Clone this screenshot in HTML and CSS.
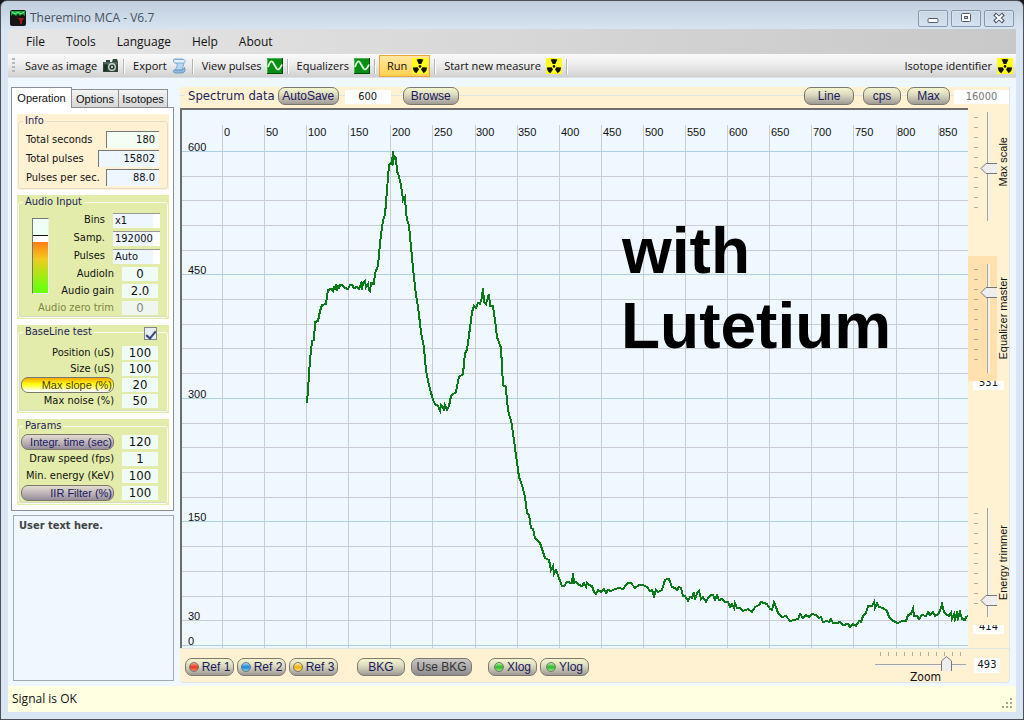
FILE: index.html
```html
<!DOCTYPE html>
<html lang="en">
<head>
<meta charset="utf-8">
<title>Theremino MCA - V6.7</title>
<link rel="stylesheet" href="styles.css">
</head>
<body>
<svg class="defs" aria-hidden="true">
  <symbol id="nuke" viewBox="0 0 16 16">
    <rect width="16" height="16" fill="#ffff1e"/>
    <g fill="#111">
      <path d="M4.6 1.6Q8 .2 11.4 1.6L9.3 6H6.7Z"/>
      <path d="M.8 9.4L5.6 9.2L7 11.6L4.3 15.3Q1.2 13.4 .8 9.4Z"/>
      <path d="M15.2 9.4L10.4 9.2L9 11.6L11.7 15.3Q14.8 13.4 15.2 9.4Z"/>
      <circle cx="8" cy="8.4" r="1.3"/>
    </g>
  </symbol>
  <symbol id="wave" viewBox="0 0 16 16">
    <rect width="16" height="16" fill="#078c14"/>
    <path d="M0 .5H16M.5 0V16" stroke="#46b64b"/>
    <path d="M0 15.5H16M15.5 0V16" stroke="#044b0a"/>
    <path d="M1 9Q3.500 1 6 4.500L9.500 10.500Q12 13.500 15 6.500" fill="none" stroke="#d9ffd9" stroke-width="1.800"/>
  </symbol>
  <symbol id="camera" viewBox="0 0 17 14">
    <path d="M1 3H4V1H8V3H10L11 0H15L16 3V13H1Z" fill="#2e4638"/>
    <path d="M1.500 4H15.500" stroke="#6d8574"/>
    <rect x="2" y="6" width="3" height="6" fill="#1d2f25"/>
    <circle cx="10" cy="8" r="4" fill="#c9d4c8"/><circle cx="10" cy="8" r="2.600" fill="#24382c"/><circle cx="10" cy="8" r="1.200" fill="#b8cbb9"/>
  </symbol>
  <symbol id="scroll" viewBox="0 0 16 16">
    <path d="M2 1H11Q13 2 12 5L10 12H3Q6 9 5 5H3Q0 4 2 1Z" fill="#b7d6ef" stroke="#6f9fc6" stroke-width=".8"/>
    <path d="M2 1.500H12Q15 3 12 5H3" fill="#e2f0fb" stroke="#6f9fc6" stroke-width=".8"/>
    <path d="M2 12H10Q12 11 12.500 9.500Q14.500 13 11 15H3Q0 14 2 12Z" fill="#8db9dc" stroke="#5d8fb9" stroke-width=".8"/>
  </symbol>
</svg>
<div class="window">
  <header class="titlebar">
    <svg class="app-icon" viewBox="0 0 16 16"><rect width="16" height="16" rx="2" fill="#161616"/><path d="M1 1H15V6L12 4L10 6L8 4L6 6L3 4L1 6Z" fill="#19a63a"/><path d="M2 2L5 4L8 2L11 4L14 2" stroke="#86e69a" fill="none"/><path d="M8 8H14L12 11V14H10V11Z" fill="#a81515"/></svg>
    <span class="title">Theremino MCA - V6.7</span>
    <div class="winbtns">
      <button aria-label="Minimize"><svg width="12" height="12"><rect x="1" y="6.500" width="10" height="4" rx="1" fill="#fff" stroke="#535c6b"/></svg></button>
      <button aria-label="Maximize"><svg width="12" height="12"><rect x="1.500" y="1.500" width="9" height="8" rx="1" fill="#fff" stroke="#535c6b"/><rect x="4.500" y="4.500" width="3" height="2" fill="#c5d3e4" stroke="#535c6b"/></svg></button>
      <button aria-label="Close"><svg width="12" height="12"><path d="M1.500 2L10.500 10M10.500 2L1.500 10" stroke="#535c6b" stroke-width="4"/><path d="M2.500 2.800L9.500 9.200M9.500 2.800L2.500 9.200" stroke="#fff" stroke-width="2"/></svg></button>
    </div>
  </header>
  <nav class="menubar">
    <button>File</button><button>Tools</button><button>Language</button><button>Help</button><button>About</button>
  </nav>
  <div class="toolbar">
    <i class="grip"></i>
    <button>Save as image<svg class="ico cam"><use href="#camera"/></svg></button>
    <button>Export<svg class="ico"><use href="#scroll"/></svg></button>
    <button>View pulses<svg class="ico"><use href="#wave"/></svg></button>
    <button>Equalizers<svg class="ico"><use href="#wave"/></svg></button>
    <button class="active">Run<svg class="ico"><use href="#nuke"/></svg></button>
    <button>Start new measure<svg class="ico"><use href="#nuke"/></svg></button>
    <button class="last">Isotope identifier<svg class="ico"><use href="#nuke"/></svg></button>
  </div>
  <main class="body">
    <aside class="side">
      <div class="tabs" role="tablist">
        <button role="tab" class="tab on" aria-selected="true">Operation</button><button role="tab" class="tab" aria-selected="false">Options</button><button role="tab" class="tab" aria-selected="false">Isotopes</button>
      </div>
      <div class="panel">
        <div class="group cream"><fieldset class="info"><legend>Info</legend>
          <div class="row"><label for="ts">Total seconds</label><input id="ts" class="sunk mint" value="180"></div>
          <div class="row"><label for="tp">Total pulses</label><input id="tp" class="sunk wide" value="15802"></div>
          <div class="row"><label for="pps">Pulses per sec.</label><input id="pps" class="sunk" value="88.0"></div>
        </fieldset></div>
        <div class="group"><fieldset class="audio"><legend>Audio Input</legend>
          <div class="meter" role="img" aria-label="Audio level"><i></i></div>
          <div class="rows">
            <div class="row combo"><label for="bins">Bins</label><select id="bins"><option>x1</option></select></div>
            <div class="row combo"><label for="samp">Samp.</label><select id="samp"><option>192000</option></select></div>
            <div class="row combo"><label for="pul">Pulses</label><select id="pul"><option>Auto</option></select></div>
            <div class="row"><label for="ain">AudioIn</label><input id="ain" class="num" value="0"></div>
            <div class="row"><label for="gain">Audio gain</label><input id="gain" class="num" value="2.0"></div>
            <div class="row dim"><label for="trim">Audio zero trim</label><input id="trim" class="num" value="0"></div>
          </div>
        </fieldset></div>
        <div class="group"><fieldset class="base"><legend>BaseLine test</legend>
          <input type="checkbox" class="check" aria-label="BaseLine test" checked>
          <div class="row"><label for="pos">Position (uS)</label><input id="pos" class="num" value="100"></div>
          <div class="row"><label for="size">Size (uS)</label><input id="size" class="num" value="100"></div>
          <div class="row"><button class="pill gold">Max slope (%)</button><input class="num" aria-label="Max slope (%)" value="20"></div>
          <div class="row"><label for="noise">Max noise (%)</label><input id="noise" class="num" value="50"></div>
        </fieldset></div>
        <div class="group"><fieldset class="params"><legend>Params</legend>
          <div class="row"><button class="pill mauve">Integr. time (sec)</button><input class="num" aria-label="Integr. time (sec)" value="120"></div>
          <div class="row"><label for="fps">Draw speed (fps)</label><input id="fps" class="num" value="1"></div>
          <div class="row"><label for="kev">Min. energy (KeV)</label><input id="kev" class="num" value="100"></div>
          <div class="row"><button class="pill mauve">IIR Filter (%)</button><input class="num" aria-label="IIR Filter (%)" value="100"></div>
        </fieldset></div>
      </div>
      <textarea class="user" aria-label="User text">User text here.</textarea>
    </aside>
    <section class="spectrum">
      <div class="head">
        <span class="name">Spectrum data</span>
        <button class="pill w60">AutoSave</button>
        <input class="box" aria-label="AutoSave seconds" value="600">
        <button class="pill w56">Browse</button>
        <span class="fill"></span>
        <button class="pill w50">Line</button>
        <button class="pill w38">cps</button>
        <button class="pill w43">Max</button>
        <input class="box grey" aria-label="Max value" value="16000">
      </div>
      <div class="chart">
        <svg class="plot" viewBox="182 110 786 539" preserveAspectRatio="xMinYMin slice" role="img" aria-label="Energy spectrum with Lutetium">
          <path class="grid" d="M222.500 125V649M264.500 125V649M306.500 125V649M348.500 125V649M390.500 125V649M432.500 125V649M475.500 125V649M517.500 125V649M559.500 125V649M601.500 125V649M643.500 125V649M685.500 125V649M727.500 125V649M769.500 125V649M811.500 125V649M853.500 125V649M896.500 125V649M938.500 125V649"/>
          <path class="grid" d="M182 176.500H968M182 200.500H968M182 225.500H968M182 250.500H968M182 299.500H968M182 324.500H968M182 348.500H968M182 373.500H968M182 423.500H968M182 447.500H968M182 472.500H968M182 497.500H968M182 546.500H968M182 571.500H968M182 596.500H968M182 620.500H968"/>
          <path class="major" d="M182 151.500H968M182 274.500H968M182 398.500H968M182 521.500H968M182 645.500H968"/>
          <g class="axis">
            <text x="224" y="136">0</text><text x="266" y="136">50</text><text x="308" y="136">100</text><text x="350" y="136">150</text><text x="392" y="136">200</text><text x="434" y="136">250</text><text x="476" y="136">300</text><text x="518" y="136">350</text><text x="561" y="136">400</text><text x="603" y="136">450</text><text x="645" y="136">500</text><text x="687" y="136">550</text><text x="729" y="136">600</text><text x="771" y="136">650</text><text x="813" y="136">700</text><text x="855" y="136">750</text><text x="897" y="136">800</text><text x="939" y="136">850</text>
            <text x="188" y="151">600</text><text x="188" y="274">450</text><text x="188" y="398">300</text><text x="188" y="521">150</text><text x="188" y="620">30</text><text x="188" y="645">0</text>
          </g>
          <path class="curve" d="M307 403L308 390L310 360L312 341L314 340L315 322L318 321L320 311L322 305L326 304L328 290L331 289L333 291L334 286L335 290L336 284L337 291L338 285L339 289L340 285L342 285L345 288L348 289L350 285L352 285L354 288L357 287L359 289L361 284L362 290L363 283L365 281L366 287L368 284L369 290L370 291L371 283L374 284L375 273L378 266L380 243L383 220L385 215L387 190L389 165L391 163L392 164L393 151L393 165L394 156L396 158L397 172L398 173L401 185L403 200L405 197L406 212L407 220L409 225L411 247L413 268L416 295L418 307L421 332L424 348L426 370L429 385L433 400L435 404L438 406L440 411L441 405L443 407L444 411L445 405L447 410L449 406L451 396L452 395L456 392L459 377L463 374L465 353L467 350L470 328L472 312L474 306L476 308L478 303L480 304L482 297L483 288L484 302L486 304L488 297L489 294L490 306L493 306L495 320L497 337L501 348L503 385L506 387L507 402L509 415L511 420L513 433L515 448L519 477L522 485L525 497L527 513L529 515L531 528L533 529L535 538L540 543L543 552L545 558L549 560L551 570L553 566L554 574L556 570L559 578L562 586L564 586L567 582L572 583L573 573L574 583L576 582L579 585L582 586L584 583L586 587L587 583L589 585L592 586L594 592L596 594L598 590L601 592L604 589L606 593L608 590L611 591L615 589L619 588L623 589L626 585L628 583L631 583L635 588L639 585L643 585L647 587L650 591L652 590L654 596L656 590L658 592L662 590L665 580L667 579L669 579L672 587L675 588L677 590L679 587L681 588L683 596L685 596L688 601L690 597L692 598L694 592L695 600L697 593L699 591L701 599L703 597L706 602L708 598L711 595L713 595L715 600L717 595L719 600L722 599L725 602L728 602L730 607L732 604L734 608L735 603L737 608L740 608L743 611L748 609L752 612L755 607L759 605L761 602L764 603L767 604L770 609L772 610L774 602L776 607L778 613L782 617L786 616L790 621L794 620L798 619L800 614L803 618L806 615L809 617L812 614L816 615L819 618L821 617L823 622L827 621L829 622L831 619L833 623L837 623L840 622L843 625L848 624L850 627L853 624L856 626L859 621L861 622L863 616L866 613L868 606L872 606L874 602L875 608L877 603L879 607L883 608L887 611L889 617L892 620L895 622L898 623L902 621L906 621L908 615L911 614L913 609L914 616L917 616L919 619L922 615L926 616L928 612L930 615L933 612L935 616L938 614L940 611L942 604L944 612L946 614L949 616L951 613L952 619L954 614L955 619L957 613L958 618L960 612L962 619L965 620L966 617L968 616"/>
          <g class="note"><text x="622" y="273">with</text><text x="621" y="348">Lutetium</text></g>
        </svg>
      </div>
      <div class="sliders">
        <div class="vs top"><div class="ticks"></div><input id="mx" type="range" value="52"><label for="mx">Max scale</label></div>
        <div class="vs mid"><div class="ticks"></div><input id="eq" type="range" value="23"><label for="eq">Equalizer master</label></div>
        <output class="val">531</output>
        <div class="vs low"><div class="ticks"></div><input id="en" type="range" value="89"><label for="en">Energy trimmer</label></div>
        <output class="val bottom">414</output>
      </div>
      <div class="foot">
        <button class="pill ref"><i class="dot red"></i>Ref 1</button>
        <button class="pill ref"><i class="dot blue"></i>Ref 2</button>
        <button class="pill ref"><i class="dot amber"></i>Ref 3</button>
        <button class="pill bkg">BKG</button>
        <button class="pill use">Use BKG</button>
        <button class="pill ref"><i class="dot green"></i>Xlog</button>
        <button class="pill ref"><i class="dot green"></i>Ylog</button>
        <div class="zoom"><div class="hticks"></div><input id="zm" type="range" value="82"><label for="zm">Zoom</label></div>
        <output class="zval">493</output>
      </div>
    </section>
  </main>
  <footer class="status"><span>Signal is OK</span>
    <svg width="12" height="12"><path d="M9 1h2M9 5h2M9 9h2M5 5h2M5 9h2M1 9h2" stroke="#a6a695" stroke-width="2"/></svg></footer>
</div>
</body>
</html>
```
FILE: styles.css
```css
* { box-sizing: border-box; }
body { margin: 0; background: #16161c; font: 11px/14px "DejaVu Sans Condensed", "DejaVu Sans", sans-serif; color: #111; }
button, input, select, textarea { font: inherit; color: inherit; margin: 0; padding: 0; border: 0; background: none; border-radius: 0; }
.defs { position: absolute; width: 0; height: 0; }
.window { min-height: 100vh; display: flex; flex-direction: column; border: 1px solid #4c4f58; border-radius: 7px 7px 0 0; padding: 0 7px 7px; background: linear-gradient(#c0cedd, #d9e5f2 30px); }

.titlebar { height: 28px; display: flex; align-items: center; padding: 6px 2px 0; font: 12px/16px "Open Sans", "Noto Sans", sans-serif; color: #48525f; }
.app-icon { width: 16px; height: 16px; margin-right: 4px; }
.winbtns { margin-left: auto; display: flex; gap: 3px; }
.winbtns button { width: 30px; height: 17px; border: 1px solid #8797ae; border-radius: 2px; box-shadow: inset 0 0 0 1px #d7e2ef; display: grid; place-items: center; }

.menubar { height: 25px; display: flex; align-items: center; padding-left: 7px; background: linear-gradient(90deg, #e6e6e6, #c8c8c8); font: 12px/16px "Open Sans", "Noto Sans", sans-serif; }
.menubar button { padding: 0 10px 0 11px; }
.toolbar { height: 24px; display: flex; align-items: center; background: linear-gradient(#fafafa, #ededed 45%, #d0d0d0); border-bottom: 1px solid #dcdfe3; font: 11px/16px "Open Sans", "Noto Sans", sans-serif; }
.grip { width: 3px; height: 15px; margin: 0 5px 0 4px; background: repeating-linear-gradient(#b8b8b8 0 2px, transparent 2px 4px); }
.toolbar button { display: flex; align-items: center; gap: 5px; height: 22px; padding: 0 4px 0 5px; margin-right: 5px; position: relative; white-space: nowrap; }
.toolbar button:not(.last)::after { content: ""; position: absolute; right: -2px; top: 4px; width: 2px; height: 15px; background: linear-gradient(90deg, #b4b4b4 50%, #fff 50%); }
.toolbar .active { background: linear-gradient(#ffe9a8, #ffd04c); outline: 1px solid #e5a93a; outline-offset: -1px; padding: 0 2px 0 8px; margin-right: 9px; }
.toolbar .active::after { margin-right: -4px; }
.toolbar .last { margin: 0 0 0 auto; padding: 0 3px; }
.ico { width: 16px; height: 16px; }
.cam { width: 17px; height: 14px; }

.body { flex: 1; display: grid; grid-template-columns: 163px 1fr; gap: 6px; padding: 9px 6px 3px 3px; background: #eff7ff; }
.side { display: flex; flex-direction: column; }
.tabs { display: flex; align-items: flex-end; height: 20px; position: relative; z-index: 1; font: 11px/14px "Liberation Sans", Arial, sans-serif; }
.tab { height: 18px; width: 47px; border: 1px solid #8b8e94; border-bottom: 0; background: linear-gradient(#f4f4f4, #d6d6d6); }
.tab + .tab + .tab { width: 49px; border-left: 0; }
.tab.on { height: 21px; width: 61px; background: #fff; margin-bottom: -1px; border-right-width: 1px; }
.tab.on + .tab { border-left: 0; }
.panel { border: 1px solid #8b8e94; background: #fff; padding: 6px 4px 5px 5px; display: flex; flex-direction: column; gap: 6px; }
.group { background: #e3ecab; padding: 0 1px 1px; }
.group.cream { background: #fff2d3; }
.group.cream + .group { margin-top: -1px; }
fieldset { margin: 0; padding: 0 9px 2px 2px; border: 1px solid #f7faf0; border-radius: 3px; box-shadow: inset 1px -1px 0 #d7dcc0; min-width: 0; position: relative; }
.cream fieldset { border-color: #e3ddd0; box-shadow: none; }
legend { margin-left: 2px; padding: 0 2px; height: 14px; color: #1d1c5c; }
.row { display: flex; align-items: center; justify-content: flex-end; gap: 8px; height: 17px; white-space: nowrap; }
.num { width: 36px; height: 14px; background: #f0fbf6; text-align: center; font-size: 13px; }
.info { padding: 2px 8px 1px 7px; }
.info legend { margin-left: -3px; }
.info .row { height: 19px; justify-content: space-between; gap: 0; }
.sunk { width: 53px; height: 17px; background: #eef6ff; border-top: 1px solid #777; border-left: 1px solid #777; text-align: right; padding: 0 4px 2px 0; }
.sunk.mint { background: #f3fff4; }
.sunk.wide { width: 61px; }
.audio { padding-top: 2px; padding-bottom: 1px; }
.combo { height: 18px; padding-right: 0; margin-right: -2px; }
.combo select { width: 47px; height: 15px; appearance: none; background: linear-gradient(90deg, #eef6ff 40px, #fff 40px); border-top: 1px solid #999; padding-left: 2px; line-height: 13px; }
.dim { color: #7d8540; }
.dim .num { color: #888; background: #eef6ee; }
.meter { position: absolute; left: 13px; top: 9px; width: 17px; height: 76px; border: 1px solid #777; border-right-color: #eee; border-bottom-color: #eee; background: linear-gradient(#f0fff6 16px, #111 16px 17px, #fff 17px 23px, #ff7d12 23px, #f2ca20 40px, #70ff0c 68px); }
.base { padding-top: 6px; }
.base .row { height: 16px; }
.check { position: absolute; right: 10px; top: -12px; width: 13px; height: 13px; appearance: none; border: 1px solid #7f858c; background: #e9edf4; display: grid; place-items: center; }
.check::after { content: ""; width: 4px; height: 8px; border: solid #35457e; border-width: 0 2px 2px 0; transform: rotate(40deg); }
.params { padding-top: 0; }
.user { flex: 1; resize: none; outline: 0; margin: 4px 0 2px 2px; padding: 3px 5px; border: 1px solid #a3a9b1; background: #eff7ff; font: bold 11px/14px "DejaVu Sans Condensed", "DejaVu Sans", sans-serif; color: #444; }

.pill { display: inline-flex; align-items: center; justify-content: center; height: 18px; border: 1px solid #7d786e; border-radius: 7px; background: linear-gradient(#f5f6cf, #dedcc0 40%, #9f9a96); font: 12px/14px "Liberation Sans", Arial, sans-serif; color: #20195f; white-space: nowrap; }
.row .pill { width: 94px; height: 16px; justify-content: flex-end; padding-right: 1px; font-size: 11px; }
.pill.gold { background: linear-gradient(#f7a800, #ffff0a 45%, #fff 95%); color: #4d3a10; }
.pill.mauve { background: linear-gradient(#e3dccf, #bfb6bb 50%, #948c98); }
.w60 { width: 61px; } .w56 { width: 56px; } .w50 { width: 50px; } .w38 { width: 38px; } .w43 { width: 43px; }

.spectrum { display: grid; grid-template-columns: 1fr 41px; grid-template-rows: 21px 1fr 34px; background: #fff2d3; border: solid #dfe4e6; border-width: 0 1px 1px 0; border-radius: 0 0 4px 4px; }
.head { grid-column: 1 / 3; display: flex; align-items: center; background: linear-gradient(transparent 8px, #dfe4e6 8px 9px, transparent 9px); padding: 0 0 3px 5px; }
.head .name { font-size: 13px; line-height: 16px; color: #1d1c5c; padding: 0 3px; background: #fff2d3; }
.box { width: 46px; height: 14px; background: #fff; text-align: center; margin: 2px 12px 0 6px; }
.box.grey { width: 55px; margin: 2px 0 0 4px; color: #777; }
.fill { flex: 1; }
.head .w50 { margin-right: 9px; }
.head .w38 { margin-right: 6px; }
.chart { border-top: 2px solid #6e6e6e; border-left: 2px solid #6e6e6e; background: #eff7ff; overflow: hidden; min-width: 0; min-height: 0; position: relative; }
.plot { position: absolute; inset: 0; width: 100%; height: 100%; shape-rendering: crispEdges; }
.grid { stroke: #cbcbd3; fill: none; }
.major { stroke: #acd0e0; fill: none; }
.axis { font: 11px "Liberation Sans", Arial, sans-serif; fill: #111; }
.curve { stroke: #0a7a18; stroke-width: 2; fill: none; }
.note { font: bold 64px "Liberation Sans", Arial, sans-serif; fill: #000; }

.sliders { display: flex; flex-direction: column; padding-top: 4px; }
.vs { height: 109px; flex: none; display: flex; padding-left: 4px; position: relative; z-index: 1; }
.vs.mid { height: 125px; margin-top: 35px; padding-top: 8px; padding-bottom: 8px; background: linear-gradient(90deg, #ffe0ae 29px, #fff2d3 29px); }
.vs.low { height: 117px; margin-top: auto; padding-bottom: 8px; background: #fff2d3; }
.vs label { writing-mode: vertical-rl; transform: rotate(180deg); align-self: center; line-height: 12px; white-space: nowrap; font-family: "Liberation Sans", Arial, sans-serif; }
.vs.top label { align-self: flex-start; margin-top: 25px; }
.ticks { width: 4px; margin: 5px 2px 4px 2px; background: repeating-linear-gradient(#b5aa98 0 1px, transparent 1px 10px); }
input[type=range] { appearance: none; outline: 0; }
.vs input { writing-mode: vertical-lr; width: 17px; height: 109px; background: linear-gradient(90deg, transparent 7px, #a8a59c 7px 8px, #f3f3ee 8px 10px, transparent 10px); }
.vs input::-webkit-slider-thumb { appearance: none; width: 17px; height: 11px; background: url("data:image/svg+xml,%3Csvg xmlns='http://www.w3.org/2000/svg' width='17' height='11'%3E%3Cpath d='M17 .5H6L1 5.5L6 10.5H17' fill='%23eee' stroke='%23777'/%3E%3C/svg%3E"); }
.val { display: block; height: 14px; margin: -5px 5px 0; background: #fff; text-align: center; }
.val.bottom { margin-bottom: 14px; }

.foot { grid-column: 1 / 3; display: flex; align-items: center; gap: 3px; padding: 3px 9px 0 5px; border-top: 1px solid #e0e4e6; }
.ref { width: 49px; gap: 3px; }
.bkg { width: 48px; margin-left: 16px; }
.use { width: 61px; margin: 0 13px 0 3px; background: linear-gradient(#c9c7c4, #8d8b8d); color: #333; }
.dot { width: 10px; height: 10px; border-radius: 50%; border: 1px solid #777; }
.red { background: linear-gradient(#ffa68a, #e33a1c 50%, #ff8666); }
.blue { background: linear-gradient(#a5dcff, #1c86dc 50%, #72d0ff); }
.amber { background: linear-gradient(#fff0a0, #eab010 50%, #ffe05c); }
.green { background: linear-gradient(#b2f79c, #33b52c 50%, #85ee70); }
.zoom { margin-left: auto; width: 91px; display: flex; flex-direction: column; align-items: center; }
.zoom label { font-size: 12px; line-height: 12px; margin-left: 10px; }
.hticks { width: 82px; height: 4px; background: repeating-linear-gradient(90deg, #b5aa98 0 1px, transparent 1px 8px); }
.zoom input { width: 91px; height: 15px; background: linear-gradient(transparent 8px, #a8a59c 8px 9px, #f3f3ee 9px 11px, transparent 11px); }
.zoom input::-webkit-slider-thumb { appearance: none; width: 11px; height: 15px; background: url("data:image/svg+xml,%3Csvg xmlns='http://www.w3.org/2000/svg' width='11' height='15'%3E%3Cpath d='M.5 15V5L5.500 .5L10.500 5V15' fill='%23eee' stroke='%23777'/%3E%3C/svg%3E"); }
.zval { width: 26px; height: 15px; margin: 0 0 4px 5px; background: #fff; text-align: center; }

.status { height: 26px; display: flex; align-items: center; justify-content: space-between; padding: 0 3px 0 4px; background: #ffffe1; font: 12px/16px "Open Sans", "Noto Sans", sans-serif; }
.status svg { align-self: flex-end; margin-bottom: 2px; }
```
